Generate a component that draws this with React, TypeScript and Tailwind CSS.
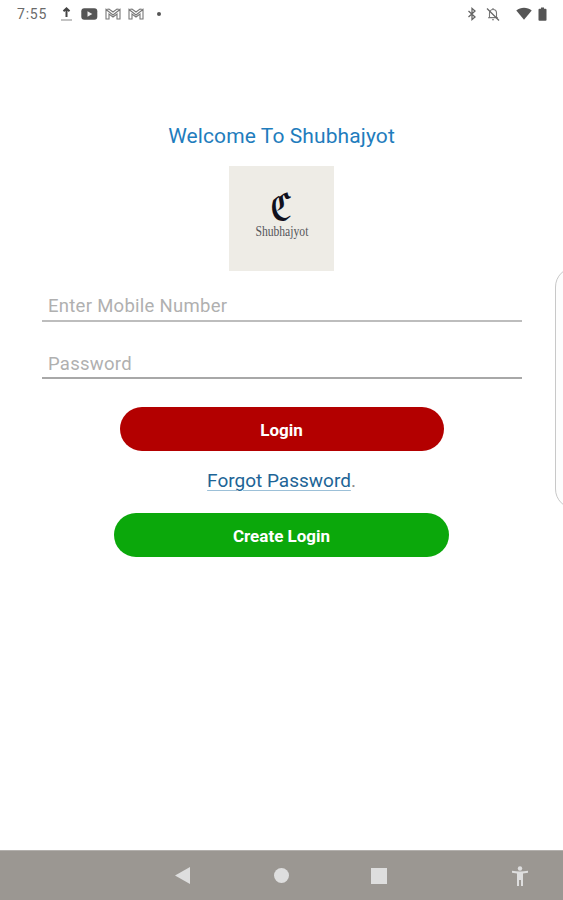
import React from 'react';

const StatusBar: React.FC = () => (
  <div className="flex h-[27px] items-center pl-[17px] pr-[16px] text-[#6a6a6a]">
    <span className="w-[44px] pt-px text-[14px] tracking-[0.8px]">7:55</span>
    <svg className="h-[16px] w-[11px]" viewBox="0 0 11 16">
      <path d="M5.5 11V2.5M2.5 5.3l3-3 3 3" fill="none" stroke="#444" strokeWidth="2" />
      <path d="M0 14h11" stroke="#aaa" strokeWidth="1.4" />
    </svg>
    <svg className="ml-[9px] h-[12px] w-[17px]" viewBox="0 0 17 12">
      <rect x="0.3" y="0.3" width="16" height="11.4" rx="3" fill="#555" />
      <path d="M6.5 3.3v5.4L11.3 6z" fill="#eee" />
    </svg>
    <MailIcon />
    <MailIcon />
    <span className="ml-[13px] size-[4px] rounded-full bg-[#555]" />
    <div className="ml-auto flex items-center">
      <svg className="h-[14px] w-[10px]" viewBox="0 0 10 13">
        <path d="M1.5 3.5l6.5 6L5 12V1l3 2.5-6.5 6" fill="none" stroke="#666" strokeWidth="1.3" />
      </svg>
      <svg className="ml-[9px] h-[14px] w-[14px]" viewBox="0 0 14 14">
        <path d="M3.5 10.5V6a3.5 3.5 0 0 1 7 0v4.5zM2 10.8h10M6 12.8h2M7 1v1.5" fill="none" stroke="#777" strokeWidth="1.1" />
        <path d="M1 1.5l12 12" stroke="#666" strokeWidth="1.2" />
      </svg>
      <svg className="ml-[16px] h-[13px] w-[16px]" viewBox="0 0 17 13" preserveAspectRatio="none">
        <path d="M0.3 3.5C5 -0.3 12 -0.3 16.7 3.5L8.5 12.8z" fill="#555" />
      </svg>
      <svg className="ml-[6px] h-[14px] w-[9px]" viewBox="0 0 9 14">
        <path d="M3 0.5h3v1.3h1.5q1 0 1 1V13q0 .7-1 .7h-6q-1 0-1-.7V2.8q0-1 1-1H3z" fill="#555" />
      </svg>
    </div>
  </div>
);

const MailIcon: React.FC = () => (
  <svg className="ml-[7px] h-[12px] w-[16px]" viewBox="0 0 16 12">
    <path
      d="M1 11V1.5L8 7l7-5.5V11h-3V6L8 9 4 6v5zM1 1.5L4 1l4 3 4-3 3 .5"
      fill="none"
      stroke="#777"
      strokeWidth="1.1"
    />
  </svg>
);

const Logo: React.FC = () => (
  <div className="mt-[16px] flex h-[105px] w-[105px] flex-col items-center bg-[#eeece6]">
    <span className="mt-[27px] h-[32px] scale-x-[0.7] font-['DejaVu_Math_TeX_Gyre','DejaVu_Serif',serif] text-[36px] leading-[32px] text-[#10101c]">
      𝕮
    </span>
    <span className="-mt-px origin-center scale-x-[0.83] font-['Liberation_Serif',serif] text-[14px] leading-[16px] text-[#55555a]">
      Shubhajyot
    </span>
  </div>
);

const NavBar: React.FC = () => (
  <div className="grid h-[50px] grid-cols-[175px_99px_97px_141px_1fr] items-center border-t border-[#b3b0ad] bg-[#9b9792]">
    <span />
    <svg className="h-[17px] w-[15px]" viewBox="0 0 15 17">
      <path d="M15 0v17L0 8.5z" fill="#dedede" />
    </svg>
    <span className="size-[15px] rounded-full bg-[#dedede]" />
    <span className="size-[16px] bg-[#dedede]" />
    <svg className="h-[20px] w-[16px]" viewBox="0 0 16 20">
      <circle cx="8" cy="2.5" r="2.2" fill="#dedede" />
      <path d="M0 4.8q8 1.5 16 0v2l-5 .7V20H9v-6H7v6H5V7.5l-5-.7z" fill="#dedede" />
    </svg>
  </div>
);

export default function App() {
  return (
    <div className="relative flex h-[900px] w-[563px] flex-col overflow-hidden bg-white font-['Roboto',sans-serif]">
      <StatusBar />
      <main className="flex flex-1 flex-col items-center pt-[95px]">
        <h1 className="h-[28px] text-[21px] leading-[28px] tracking-[0.1px] text-[#1f7dbd]">Welcome To Shubhajyot</h1>
        <Logo />
        <input
          type="text"
          placeholder="Enter Mobile Number"
          className="mt-[21px] h-[30px] w-[480px] border-b-2 border-[#bdbdbd] pl-[6.5px] text-[18.5px] tracking-[0.28px] outline-none placeholder:text-[#b0b0b0]"
        />
        <input
          type="password"
          placeholder="Password"
          className="mt-[27px] h-[30px] w-[480px] border-b-2 border-[#a8a8a8] pl-[6.5px] pt-[2px] text-[18.5px] tracking-[0.28px] outline-none placeholder:text-[#b0b0b0]"
        />
        <button className="mt-[28px] h-[44px] w-[324px] rounded-[22px] bg-[#b30000] pt-[3px] text-[17px] font-bold text-white">
          Login
        </button>
        <p className="mt-[17px] h-[26px] text-[19px] leading-[26px] text-[#1d6496]">
          <a className="underline decoration-[#9cc0d8] decoration-1 underline-offset-[3px]">Forgot Password</a>
          <span className="text-[#8a8a8a]">.</span>
        </p>
        <button className="mt-[19px] h-[44px] w-[335px] rounded-[22px] bg-[#0ba80b] pt-[3px] text-[17px] font-bold text-white">
          Create Login
        </button>
      </main>
      <NavBar />
      {/* edge panel handle */}
      <div className="absolute left-[555px] top-[267px] h-[242px] w-[40px] rounded-[24px] border border-[#c8c8c8] bg-[#fdfdfd]" />
    </div>
  );
}
